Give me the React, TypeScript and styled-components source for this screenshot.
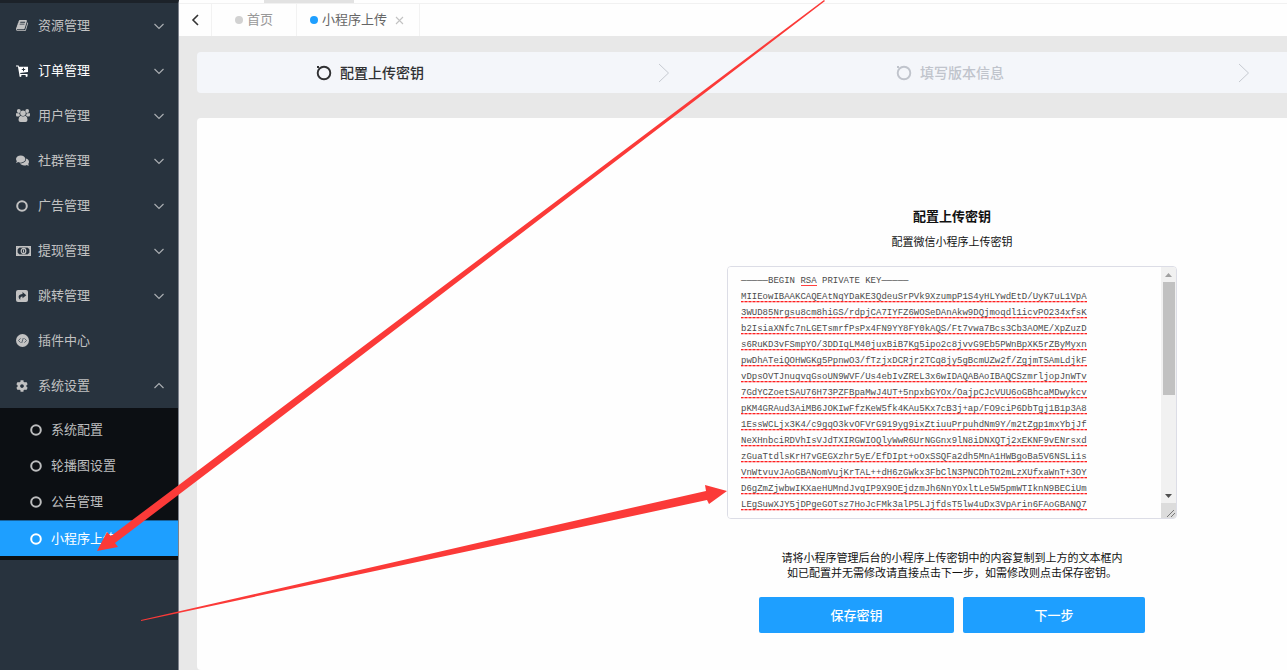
import React, { useState } from "react";
import styled, { createGlobalStyle, css } from "styled-components";
import { FaComments, FaCog } from "react-icons/fa";

const Global = createGlobalStyle`
  *, *::before, *::after { box-sizing: border-box; }
  html, body, #root { height: 100%; }
  body {
    margin: 0;
    overflow: hidden;
    background: #e8e8e8;
    color: #111;
    font-family: "Noto Sans CJK SC", "Liberation Sans", sans-serif;
    font-size: 13px;
  }
  button { font: inherit; cursor: pointer; }
`;

const Shell = styled.div`
  position: relative;
  display: flex;
  min-height: 100vh;
  overflow: hidden;
`;

const Sidebar = styled.nav`
  flex: 0 0 179px;
  border-top: 3px solid #1c2229;
  border-right: 1px solid #7d828c;
  background: #28333e;
`;

const List = styled.ul`
  margin: 0;
  padding: 0;
  list-style: none;
`;

const MenuLink = styled.a<{ $bright?: boolean }>`
  display: flex;
  align-items: center;
  height: 45px;
  padding: 0 13px 0 16px;
  color: ${(p) => (p.$bright ? "#fff" : "#c2c2c2")};
  text-decoration: none;
`;

const MenuIcon = styled.span`
  display: flex;
  width: 22px;
  svg { display: block; }
`;

const Label = styled.span`
  padding-bottom: 2px;
  line-height: 20px;
`;

const MenuText = styled(Label)`
  flex: 1;
`;

const SubList = styled(List)`
  padding: 4px 0;
  background: #0c0f13;
`;

const SubLink = styled.a<{ $active?: boolean }>`
  display: flex;
  align-items: center;
  gap: 9px;
  height: 36px;
  padding-left: 30px;
  color: #bcbdbe;
  text-decoration: none;
  ${(p) =>
    p.$active &&
    css`
      border-top: 1px solid #17639e;
      background: #1e9fff;
      color: #fff;
    `}
`;

const Main = styled.main`
  flex: 1;
  min-width: 0;
  display: flex;
  flex-direction: column;
`;

const TopStrip = styled.div`
  height: 4px;
  padding-left: 85px;
  border-bottom: 1px solid #f1f1f1;
  background: #fefefe;
`;

const StripMark = styled.div`
  width: 90px;
  height: 3px;
  background: #e2e2e2;
`;

const TabBar = styled.div`
  display: flex;
  height: 32px;
  background: #fefefe;
`;

const BackButton = styled.button`
  display: flex;
  align-items: center;
  justify-content: center;
  width: 33px;
  padding: 0;
  border: 0;
  border-right: 1px solid #f2f2f2;
  background: none;
  color: #333;
`;

const Tab = styled.div<{ $current?: boolean }>`
  display: flex;
  align-items: center;
  gap: 4px;
  padding: 0 ${(p) => (p.$current ? "13px" : "23px")};
  border-right: 1px solid #f2f2f2;
  color: ${(p) => (p.$current ? "#666" : "#999")};
`;

const Dot = styled.span<{ $on?: boolean }>`
  width: 8px;
  height: 8px;
  border-radius: 50%;
  background: ${(p) => (p.$on ? "#1e9fff" : "#d2d2d2")};
`;

const CloseButton = styled.button`
  display: flex;
  margin-left: 2px;
  padding: 2px;
  border: 0;
  background: none;
  color: #c2c2c2;
`;

const Scroller = styled.div`
  flex: 1;
  display: flex;
  flex-direction: column;
  padding: 16px 0 0 18px;
  overflow: hidden;
`;

const Steps = styled.ol`
  display: flex;
  width: 1510px;
  height: 41px;
  margin: 0 0 25px;
  padding: 0 0 0 119px;
  list-style: none;
  border-radius: 4px;
  background: #f4f6fa;
`;

const Step = styled.li<{ $current?: boolean }>`
  flex: 0 0 580px;
  display: flex;
  align-items: center;
  gap: 8px;
  color: ${(p) => (p.$current ? "#303133" : "#c0c4cc")};
  font-size: 14px;
  font-weight: 500;
`;

const StepArrow = styled.span`
  flex: 1;
  display: flex;
  justify-content: center;
  color: #c6cad1;
`;

const Card = styled.section`
  flex: 1;
  width: 1510px;
  padding: 88px 0 32px;
  border-radius: 4px;
  background: #fefefe;
`;

const Form = styled.form`
  display: flex;
  flex-direction: column;
  align-items: center;
`;

const Title = styled.h1`
  margin: 0 0 5px;
  font-size: 13px;
  font-weight: 700;
  line-height: 20px;
`;

const Subtitle = styled.label`
  margin-bottom: 15px;
  font-size: 11px;
  line-height: 20px;
`;

const KeyFrame = styled.div`
  position: relative;
  display: flex;
  width: 450px;
  height: 253px;
  border: 1px solid #dcdde6;
  border-radius: 4px;
  background: #fefefe;
  overflow: hidden;
`;

const KeyBox = styled.textarea`
  flex: 1;
  min-width: 0;
  padding: 6px 0 200px 13px;
  border: 0;
  outline: 0;
  resize: none;
  overflow: auto;
  scrollbar-width: none;
  white-space: pre;
  color: #4c4c4c;
  font-family: "Liberation Mono", monospace;
  font-size: 9px;
  line-height: 16px;
  background-color: #fefefe;
  background-image:
    linear-gradient(90deg, #ff4040, #ff4040),
    linear-gradient(#fefefe, #fefefe),
    linear-gradient(#fefefe 12px, transparent 12px, transparent 13px, #fefefeb0 13px, #fefefeb0 14px, #fefefe 14px),
    repeating-linear-gradient(90deg, #ff2020 0, #ff2020 2px, #ff8080 2px, #ff8080 4px);
  background-size: 16px 1px, 346px 20px, 346px 16px, 346px 246px;
  background-position: 73px 18px, 13px 0, 13px 6px, 13px 0;
  background-repeat: no-repeat, no-repeat, repeat-y, no-repeat;
  background-attachment: local;
`;

const ScrollRail = styled.div`
  display: flex;
  flex-direction: column;
  align-items: center;
  width: 15px;
  background: #f1f1f1;
  svg { display: block; }
`;

const Thumb = styled.div`
  width: 12px;
  height: 113px;
  background: #c1c1c1;
`;

const RailSpace = styled.div`
  flex: 1;
`;

const Note = styled.p`
  margin: 31px 0 17px;
  font-size: 11px;
  line-height: 15px;
  text-align: center;
`;

const Actions = styled.div`
  display: flex;
  gap: 9px;
`;

const Action = styled.button<{ $wide?: boolean }>`
  width: ${(p) => (p.$wide ? 195 : 182)}px;
  height: 36px;
  padding: 0 0 2px;
  border: 0;
  border-radius: 2px;
  background: #1e9fff;
  color: #fff;
  font-size: 13px;
  font-weight: 500;
`;

const Arrows = styled.svg`
  position: absolute;
  left: 0;
  top: 0;
  pointer-events: none;
`;

const Ring = () => (
  <svg width="12" height="12" viewBox="0 0 12 12" fill="none" stroke="currentColor" strokeWidth="2">
    <circle cx="6" cy="6" r="4.8" />
  </svg>
);

const Chevron = ({ up }: { up?: boolean }) => (
  <svg width="12" height="8" viewBox="0 0 12 8" fill="none" stroke="#a9adb1" strokeWidth="1.2">
    <path d={up ? "M1.5 6 6 1.5 10.5 6" : "M1.5 2 6 6.5 10.5 2"} />
  </svg>
);

const Book = () => (
  <svg width="13" height="13" viewBox="0 0 1792 1792" fill="currentColor">
    <path d="M1639 478q40 57 18 129l-275 906q-19 64-76.500 107.500t-122.500 43.500h-923q-77 0-148.500-53.500t-99.500-131.500q-24-67-2-127 0-4 3-27t4-37q1-8-3-21.500t-3-19.500q2-11 8-21t16.500-23.500 16.500-23.500q23-38 45-91.500t30-91.500q3-10 .5-30t-.5-28q3-11 17-28t17-23q21-36 42-92t25-90q1-9-2.500-32t.5-28q4-13 22-30.500t22-22.500q19-26 42.500-84.500t27.500-96.500q1-8-3-25.500t-2-26.500q2-8 9-18t18-23 17-21q8-12 16.500-30.500t15-35 16-36 19.500-32 26.500-23.500 36-11.500 47.500 5.500l-1 3q38-9 51-9h761q74 0 114 56t18 130l-274 906q-36 119-71.500 153.500t-128.500 34.500h-869q-27 0-38 15-11 16-1 43 24 70 144 70h923q29 0 56-15.500t35-41.500l300-987q7-22 5-57 38 15 59 43zm-1064 2q-4 13 2 22.500t20 9.500h608q13 0 25.500-9.500t16.500-22.500l21-64q4-13-2-22.500t-20-9.500h-608q-13 0-25.500 9.500t-16.500 22.500zm-83 256q-4 13 2 22.500t20 9.500h608q13 0 25.500-9.500t16.500-22.500l21-64q4-13-2-22.500t-20-9.500h-608q-13 0-25.500 9.500t-16.500 22.500z" />
  </svg>
);

const Cart = () => (
  <svg width="13" height="12" viewBox="0 0 13 12" fill="currentColor">
    <path d="M0 .5h2.600l.4 1.300H12v5.200L4.200 8.100l.2.900H11.500v1H3.400L1.900 1.600H0Z" />
    <circle cx="4.400" cy="10.800" r="1.100" />
    <circle cx="10.600" cy="10.800" r="1.100" />
    <path d="M7.500 2.800v3.400M5.800 4.500h3.400" stroke="#28333e" strokeWidth="1" />
  </svg>
);

const Users = () => (
  <svg width="14" height="13" viewBox="0 0 14 13" fill="currentColor">
    <circle cx="2.800" cy="2" r="1.900" />
    <circle cx="11.200" cy="2" r="1.900" />
    <path d="M0 4.300h3.200l.8 2.200L2.600 7.500H1Q0 7.500 0 6ZM14 4.300h-3.200L10 6.500l1.400 1H13q1 0 1-1.500Z" />
    <circle cx="7" cy="4.200" r="2.700" />
    <path d="M4.500 6.800q2.500 1.500 5 0 2 .8 2 4 0 2.200-2 2.200h-5q-2 0-2-2.200 0-3.200 2-4Z" />
  </svg>
);

const Money = () => (
  <svg width="15" height="10" viewBox="0 0 15 10" fill="none" stroke="currentColor">
    <rect x="0.8" y="0.8" width="13.4" height="8.4" strokeWidth="1.6" />
    <ellipse cx="7.5" cy="5" rx="2.300" ry="2.600" strokeWidth="1.200" />
    <path d="M7.500 3.500v3" strokeWidth="1" />
    <path d="M1 3 3 1M14 3 12 1M1 7 3 9M14 7 12 9" strokeWidth="1.300" />
  </svg>
);

const Share = () => (
  <svg width="12" height="12" viewBox="0 0 12 12">
    <rect width="12" height="12" rx="2" fill="currentColor" />
    <path d="M6.500 2 10.300 5.200 6.500 8.300V6.400C4.600 6.300 3.900 7.600 4.400 9.800 1.400 7.400 2.400 4 6.500 3.900Z" fill="#28333e" />
  </svg>
);

const Plugin = () => (
  <svg width="13" height="13" viewBox="0 0 13 13">
    <circle cx="6.500" cy="6.500" r="6.500" fill="currentColor" />
    <path d="M4.600 4.400 2.400 6.500l2.200 2.100M8.400 4.400l2.200 2.100-2.200 2.100M7.300 4 5.700 9" fill="none" stroke="#59636c" strokeWidth="1" />
  </svg>
);

const StepIcon = () => (
  <svg width="16" height="16" viewBox="0 0 16 16" fill="none" stroke="currentColor">
    <circle cx="8" cy="8" r="6.300" strokeWidth="1.900" />
    <rect x="1" y="1" width="2" height="2" fill="currentColor" stroke="none" />
  </svg>
);

const menu = [
  { label: "资源管理", icon: <Book /> },
  { label: "订单管理", icon: <Cart />, bright: true },
  { label: "用户管理", icon: <Users /> },
  { label: "社群管理", icon: <FaComments size={13} /> },
  { label: "广告管理", icon: <Ring /> },
  { label: "提现管理", icon: <Money /> },
  { label: "跳转管理", icon: <Share /> },
  { label: "插件中心", icon: <Plugin />, leaf: true },
  { label: "系统设置", icon: <FaCog size={12} />, open: true },
];

const submenu = ["系统配置", "轮播图设置", "公告管理", "小程序上传"];

const initialKey = `─────BEGIN RSA PRIVATE KEY─────
MIIEowIBAAKCAQEAtNqYDaKE3QdeuSrPVk9XzumpP1S4yHLYwdEtD/UyK7uL1VpA
3WUD85Nrgsu8cm8hiGS/rdpjCA7IYFZ6WOSeDAnAkw9DQjmoqdl1icvPO234xfsK
b2IsiaXNfc7nLGETsmrfPsPx4FN9YY8FY0kAQS/Ft7vwa7Bcs3Cb3AOME/XpZuzD
s6RuKD3vFSmpYO/3DDIqLM40juxBiB7Kg5ipo2c8jvvG9Eb5PWnBpXK5rZByMyxn
pwDhATeiQOHWGKg5PpnwO3/fTzjxDCRjr2TCq8jy5gBcmUZw2f/ZgjmTSAmLdjkF
vDpsOVTJnuqvqGsoUN9WVF/Us4ebIvZREL3x6wIDAQABAoIBAQCSzmrljopJnWTv
7GdYCZoetSAU76H73PZFBpaMwJ4UT+5npxbGYOx/OajpCJcVUU6oGBhcaMDwykcv
pKM4GRAud3AiMB6JOKIwFfzKeW5fk4KAu5Kx7cB3j+ap/FO9ciP6DbTgj1B1p3A8
1EssWCLjx3K4/c9gqO3kvOFVrG919yg9ixZtiuuPrpuhdNm9Y/m2tZgp1mxYbjJf
NeXHnbciRDVhIsVJdTXIRGWIOQlyWwR6UrNGGnx9lN8iDNXQTj2xEKNF9vENrsxd
zGuaTtdlsKrH7vGEGXzhr5yE/EfDIpt+oOxSSQFa2dh5MnA1HWBgoBa5V6NSLi1s
VnWtvuvJAoGBANomVujKrTAL++dH6zGWkx3FbClN3PNCDhTO2mLzXUfxaWnT+3OY
D6gZmZjwbwIKXaeHUMndJvqIP9X9OEjdzmJh6NnYOxltLe5W5pmWTIknN9BECiUm
LEgSuwXJY5jDPgeGOTsz7HoJcFMk3alP5LJjfdsT5lw4uDx3VpArin6FAoGBANQ7`;

export default function App() {
  const [key, setKey] = useState(initialKey);
  return (
    <Shell>
      <Global />
      <Sidebar>
        <List>
          {menu.map((m) => (
            <li key={m.label}>
              <MenuLink href="#" $bright={m.bright}>
                <MenuIcon>{m.icon}</MenuIcon>
                <MenuText>{m.label}</MenuText>
                {!m.leaf && <Chevron up={m.open} />}
              </MenuLink>
              {m.open && (
                <SubList>
                  {submenu.map((s, i) => (
                    <li key={s}>
                      <SubLink href="#" $active={i === 3}>
                        <Ring />
                        <Label>{s}</Label>
                      </SubLink>
                    </li>
                  ))}
                </SubList>
              )}
            </li>
          ))}
        </List>
      </Sidebar>
      <Main>
        <TopStrip>
          <StripMark />
        </TopStrip>
        <TabBar>
          <BackButton type="button" aria-label="返回">
            <svg width="9" height="12" viewBox="0 0 9 12" fill="none" stroke="currentColor" strokeWidth="1.600">
              <path d="M7 1 2 6l5 5" />
            </svg>
          </BackButton>
          <Tab>
            <Dot />
            <Label>首页</Label>
          </Tab>
          <Tab $current>
            <Dot $on />
            <Label>小程序上传</Label>
            <CloseButton type="button" aria-label="关闭">
              <svg width="9" height="9" viewBox="0 0 9 9" fill="none" stroke="currentColor" strokeWidth="1.100">
                <path d="m1 1 7 7M8 1 1 8" />
              </svg>
            </CloseButton>
          </Tab>
        </TabBar>
        <Scroller>
          <Steps>
            {["配置上传密钥", "填写版本信息"].map((s, i) => (
              <Step key={s} $current={i === 0}>
                <StepIcon />
                <Label>{s}</Label>
                <StepArrow>
                  <svg width="12" height="20" viewBox="0 0 12 20" fill="none" stroke="currentColor">
                    <path d="m1 1 9.500 9L1 19" />
                  </svg>
                </StepArrow>
              </Step>
            ))}
          </Steps>
          <Card>
            <Form onSubmit={(e) => e.preventDefault()}>
              <Title>配置上传密钥</Title>
              <Subtitle htmlFor="upload-key">配置微信小程序上传密钥</Subtitle>
              <KeyFrame>
                <KeyBox
                  id="upload-key"
                  spellCheck={false}
                  value={key}
                  onChange={(e) => setKey(e.target.value)}
                />
                <ScrollRail aria-hidden="true">
                  <svg width="15" height="15" viewBox="0 0 15 15" fill="#a0a0a0">
                    <path d="M4 10 7.500 6 11 10Z" />
                  </svg>
                  <Thumb />
                  <RailSpace />
                  <svg width="15" height="15" viewBox="0 0 15 15" fill="#505050">
                    <path d="M4 6 7.500 10 11 6Z" />
                  </svg>
                  <svg width="15" height="15" viewBox="0 0 15 15" fill="none" stroke="#777">
                    <rect width="15" height="15" fill="#dcdcdc" stroke="none" />
                    <path d="m6 14 7-7M10 14l4-4" />
                  </svg>
                </ScrollRail>
              </KeyFrame>
              <Note>
                请将小程序管理后台的小程序上传密钥中的内容复制到上方的文本框内
                <br />
                如已配置并无需修改请直接点击下一步，如需修改则点击保存密钥。
              </Note>
              <Actions>
                <Action type="submit" $wide>
                  保存密钥
                </Action>
                <Action type="button">下一步</Action>
              </Actions>
            </Form>
          </Card>
        </Scroller>
      </Main>
      <Arrows width="1287" height="670" viewBox="0 0 1287 670" fill="#fb3a38" aria-hidden="true">
        <path d="M97 551 107 532 111 536 260 424 824 0 825 1 260 433 115 543 118 547Z" />
        <path d="M141 620 600 515 706 491 705 485 727 491 709 504 707 500 600 523 141 621Z" />
      </Arrows>
    </Shell>
  );
}
